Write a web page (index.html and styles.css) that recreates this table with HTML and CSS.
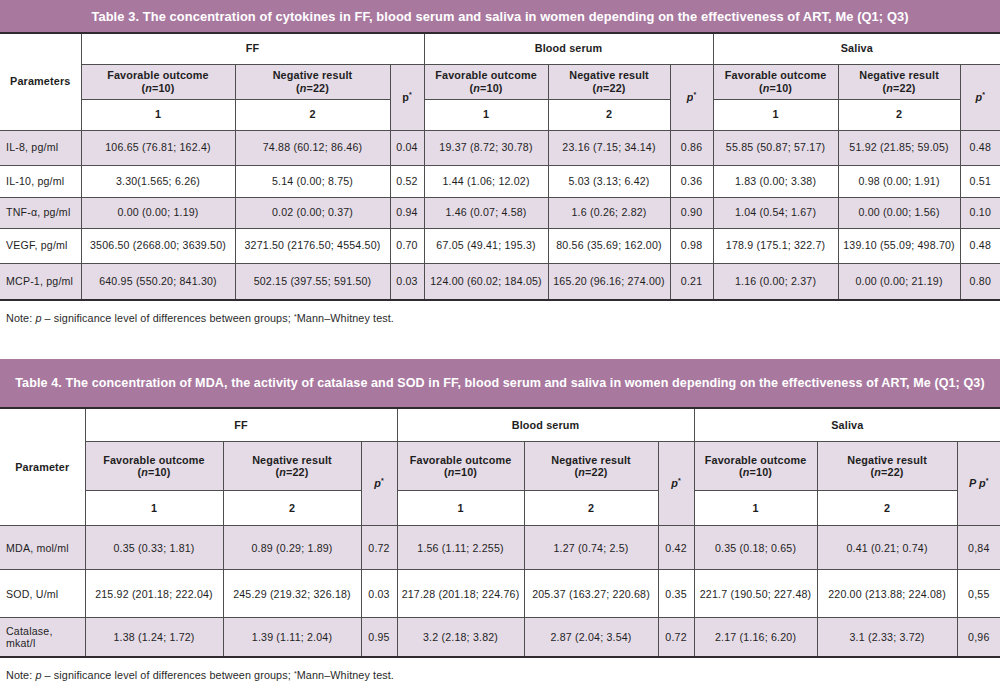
FILE: index.html
```html
<!DOCTYPE html>
<html lang="en">
<head>
<meta charset="utf-8">
<title>Tables 3 and 4</title>
<link rel="stylesheet" href="styles.css">
</head>
<body>
<section class="block block-t3">
  <div class="title title-t3">Table 3. The concentration of cytokines in FF, blood serum and saliva in women depending on the effectiveness of ART, Me (Q1; Q3)</div>
  <table class="grid">
    <colgroup>
      <col class="w81"><col class="w154"><col class="w155"><col class="w34"><col class="w124"><col class="w122"><col class="w43"><col class="w125"><col class="w122"><col class="w40">
    </colgroup>
    <thead>
      <tr class="h-grp3">
        <th rowspan="3" class="param-head">Parameters</th>
        <th colspan="3">FF</th>
        <th colspan="3">Blood serum</th>
        <th colspan="3">Saliva</th>
      </tr>
      <tr class="h-sub3 lav">
        <th>Favorable outcome<br>(<i>n</i>=10)</th>
        <th>Negative result<br>(<i>n</i>=22)</th>
        <th rowspan="2" class="lav">p<sup>*</sup></th>
        <th>Favorable outcome<br>(<i>n</i>=10)</th>
        <th>Negative result<br>(<i>n</i>=22)</th>
        <th rowspan="2" class="lav"><i>p</i><sup>*</sup></th>
        <th>Favorable outcome<br>(<i>n</i>=10)</th>
        <th>Negative result<br>(<i>n</i>=22)</th>
        <th rowspan="2" class="lav"><i>p</i><sup>*</sup></th>
      </tr>
      <tr class="h-num3">
        <th>1</th><th>2</th><th>1</th><th>2</th><th>1</th><th>2</th>
      </tr>
    </thead>
    <tbody>
      <tr class="r35 lav"><td class="name">IL-8, pg/ml</td><td>106.65 (76.81; 162.4)</td><td>74.88 (60.12; 86.46)</td><td>0.04</td><td>19.37 (8.72; 30.78)</td><td>23.16 (7.15; 34.14)</td><td>0.86</td><td>55.85 (50.87; 57.17)</td><td>51.92 (21.85; 59.05)</td><td>0.48</td></tr>
      <tr class="r32"><td class="name">IL-10, pg/ml</td><td>3.30(1.565; 6.26)</td><td>5.14 (0.00; 8.75)</td><td>0.52</td><td>1.44 (1.06; 12.02)</td><td>5.03 (3.13; 6.42)</td><td>0.36</td><td>1.83 (0.00; 3.38)</td><td>0.98 (0.00; 1.91)</td><td>0.51</td></tr>
      <tr class="r31 lav"><td class="name">TNF-α, pg/ml</td><td>0.00 (0.00; 1.19)</td><td>0.02 (0.00; 0.37)</td><td>0.94</td><td>1.46 (0.07; 4.58)</td><td>1.6 (0.26; 2.82)</td><td>0.90</td><td>1.04 (0.54; 1.67)</td><td>0.00 (0.00; 1.56)</td><td>0.10</td></tr>
      <tr class="r35"><td class="name">VEGF, pg/ml</td><td>3506.50 (2668.00; 3639.50)</td><td>3271.50 (2176.50; 4554.50)</td><td>0.70</td><td>67.05 (49.41; 195.3)</td><td>80.56 (35.69; 162.00)</td><td>0.98</td><td>178.9 (175.1; 322.7)</td><td>139.10 (55.09; 498.70)</td><td>0.48</td></tr>
      <tr class="r37 lav"><td class="name">MCP-1, pg/ml</td><td>640.95 (550.20; 841.30)</td><td>502.15 (397.55; 591.50)</td><td>0.03</td><td>124.00 (60.02; 184.05)</td><td>165.20 (96.16; 274.00)</td><td>0.21</td><td>1.16 (0.00; 2.37)</td><td>0.00 (0.00; 21.19)</td><td>0.80</td></tr>
    </tbody>
  </table>
  <p class="note">Note: <i>p</i> – significance level of differences between groups; <sup>*</sup>Mann–Whitney test.</p>
</section>

<section class="block block-t4">
  <div class="title title-t4">Table 4. The concentration of MDA, the activity of catalase and SOD in FF, blood serum and saliva in women depending on the effectiveness of ART, Me (Q1; Q3)</div>
  <table class="grid">
    <colgroup>
      <col class="w85"><col class="w138"><col class="w138"><col class="w36"><col class="w127"><col class="w134"><col class="w36"><col class="w123"><col class="w140"><col class="w43">
    </colgroup>
    <thead>
      <tr class="h-grp4">
        <th rowspan="3" class="param-head">Parameter</th>
        <th colspan="3">FF</th>
        <th colspan="3">Blood serum</th>
        <th colspan="3">Saliva</th>
      </tr>
      <tr class="h-sub4 lav">
        <th>Favorable outcome<br>(<i>n</i>=10)</th>
        <th>Negative result<br>(<i>n</i>=22)</th>
        <th rowspan="2" class="lav"><i>p</i><sup>*</sup></th>
        <th>Favorable outcome<br>(<i>n</i>=10)</th>
        <th>Negative result<br>(<i>n</i>=22)</th>
        <th rowspan="2" class="lav"><i>p</i><sup>*</sup></th>
        <th>Favorable outcome<br>(<i>n</i>=10)</th>
        <th>Negative result<br>(<i>n</i>=22)</th>
        <th rowspan="2" class="lav"><i>P p</i><sup>*</sup></th>
      </tr>
      <tr class="h-num4">
        <th>1</th><th>2</th><th>1</th><th>2</th><th>1</th><th>2</th>
      </tr>
    </thead>
    <tbody>
      <tr class="r44 lav"><td class="name">MDA, mol/ml</td><td>0.35 (0.33; 1.81)</td><td>0.89 (0.29; 1.89)</td><td>0.72</td><td>1.56 (1.11; 2.255)</td><td>1.27 (0.74; 2.5)</td><td>0.42</td><td>0.35 (0.18; 0.65)</td><td>0.41 (0.21; 0.74)</td><td>0,84</td></tr>
      <tr class="r48"><td class="name">SOD, U/ml</td><td>215.92 (201.18; 222.04)</td><td>245.29 (219.32; 326.18)</td><td>0.03</td><td>217.28 (201.18; 224.76)</td><td>205.37 (163.27; 220.68)</td><td>0.35</td><td>221.7 (190.50; 227.48)</td><td>220.00 (213.88; 224.08)</td><td>0,55</td></tr>
      <tr class="r39 lav"><td class="name">Catalase,<br>mkat/l</td><td>1.38 (1.24; 1.72)</td><td>1.39 (1.11; 2.04)</td><td>0.95</td><td>3.2 (2.18; 3.82)</td><td>2.87 (2.04; 3.54)</td><td>0.72</td><td>2.17 (1.16; 6.20)</td><td>3.1 (2.33; 3.72)</td><td>0,96</td></tr>
    </tbody>
  </table>
  <p class="note">Note: <i>p</i> – significance level of differences between groups; <sup>*</sup>Mann–Whitney test.</p>
</section>
</body>
</html>
```
FILE: styles.css
```css
html, body {
  margin: 0;
  padding: 0;
  background: #ffffff;
}
body {
  font-family: "Liberation Sans", Arial, Helvetica, sans-serif;
  color: #1e1e1e;
  width: 1000px;
}
.block-t4 {
  margin-top: 34px;
}
.title {
  background: #a9789f;
  color: #ffffff;
  font-weight: bold;
  font-size: 12.85px;
  letter-spacing: 0.1px;
  white-space: nowrap;
  text-align: center;
  display: flex;
  align-items: center;
  justify-content: center;
  border-bottom: 2px solid #2f2a2e;
}
.title-t3 {
  height: 32px;
}
.title-t4 {
  height: 48px;
  font-size: 12.55px;
}
.grid {
  width: 1000px;
  table-layout: fixed;
  border-collapse: collapse;
  border-bottom: 2px solid #2f2a2e;
}
.w81 { width: 81px; }
.w154 { width: 154px; }
.w155 { width: 155px; }
.w34 { width: 34px; }
.w124 { width: 124px; }
.w122 { width: 122px; }
.w43 { width: 43px; }
.w125 { width: 125px; }
.w40 { width: 40px; }
.w85 { width: 85px; }
.w138 { width: 138px; }
.w36 { width: 36px; }
.w127 { width: 127px; }
.w134 { width: 134px; }
.w123 { width: 123px; }
.w140 { width: 140px; }
.grid th, .grid td {
  border: 1px solid #4e4e4e;
  padding: 0 2px;
  text-align: center;
  vertical-align: middle;
  line-height: 1.2;
  overflow: hidden;
}
.grid tr > :first-child {
  border-left: none;
}
.grid tr > :last-child {
  border-right: none;
}
.grid thead tr:first-child > * {
  border-top: none;
}
.grid th {
  font-size: 10.8px;
  font-weight: bold;
  letter-spacing: 0.15px;
}
.grid th.param-head {
  border-left: none;
  background: #ffffff;
}
.grid td {
  font-size: 10.6px;
  letter-spacing: 0.2px;
  white-space: nowrap;
}
.grid td.name {
  text-align: left;
  padding-left: 6px;
  white-space: normal;
}
.grid sup {
  font-size: 7px;
  vertical-align: 4px;
  line-height: 0;
}
.lav, .lav > * {
  background: #e5dbe6;
}
.h-num3 > *, .h-num4 > * {
  background: #ffffff;
}
.h-grp3 { height: 30px; }
.h-sub3 { height: 35px; }
.h-num3 { height: 31px; }
.h-grp4 { height: 33px; }
.h-sub4 { height: 49px; }
.h-num4 { height: 35px; }
.r31 { height: 31px; }
.r32 { height: 32px; }
.r35 { height: 35px; }
.r37 { height: 37px; }
.r39 { height: 39px; }
.r44 { height: 44px; }
.r48 { height: 48px; }
.note {
  margin: 11px 0 0 6px;
  font-size: 10.8px;
  letter-spacing: 0.1px;
  color: #2a2a2a;
  line-height: 1.2;
}
.note sup {
  font-size: 7px;
  vertical-align: 3px;
  line-height: 0;
}
```
